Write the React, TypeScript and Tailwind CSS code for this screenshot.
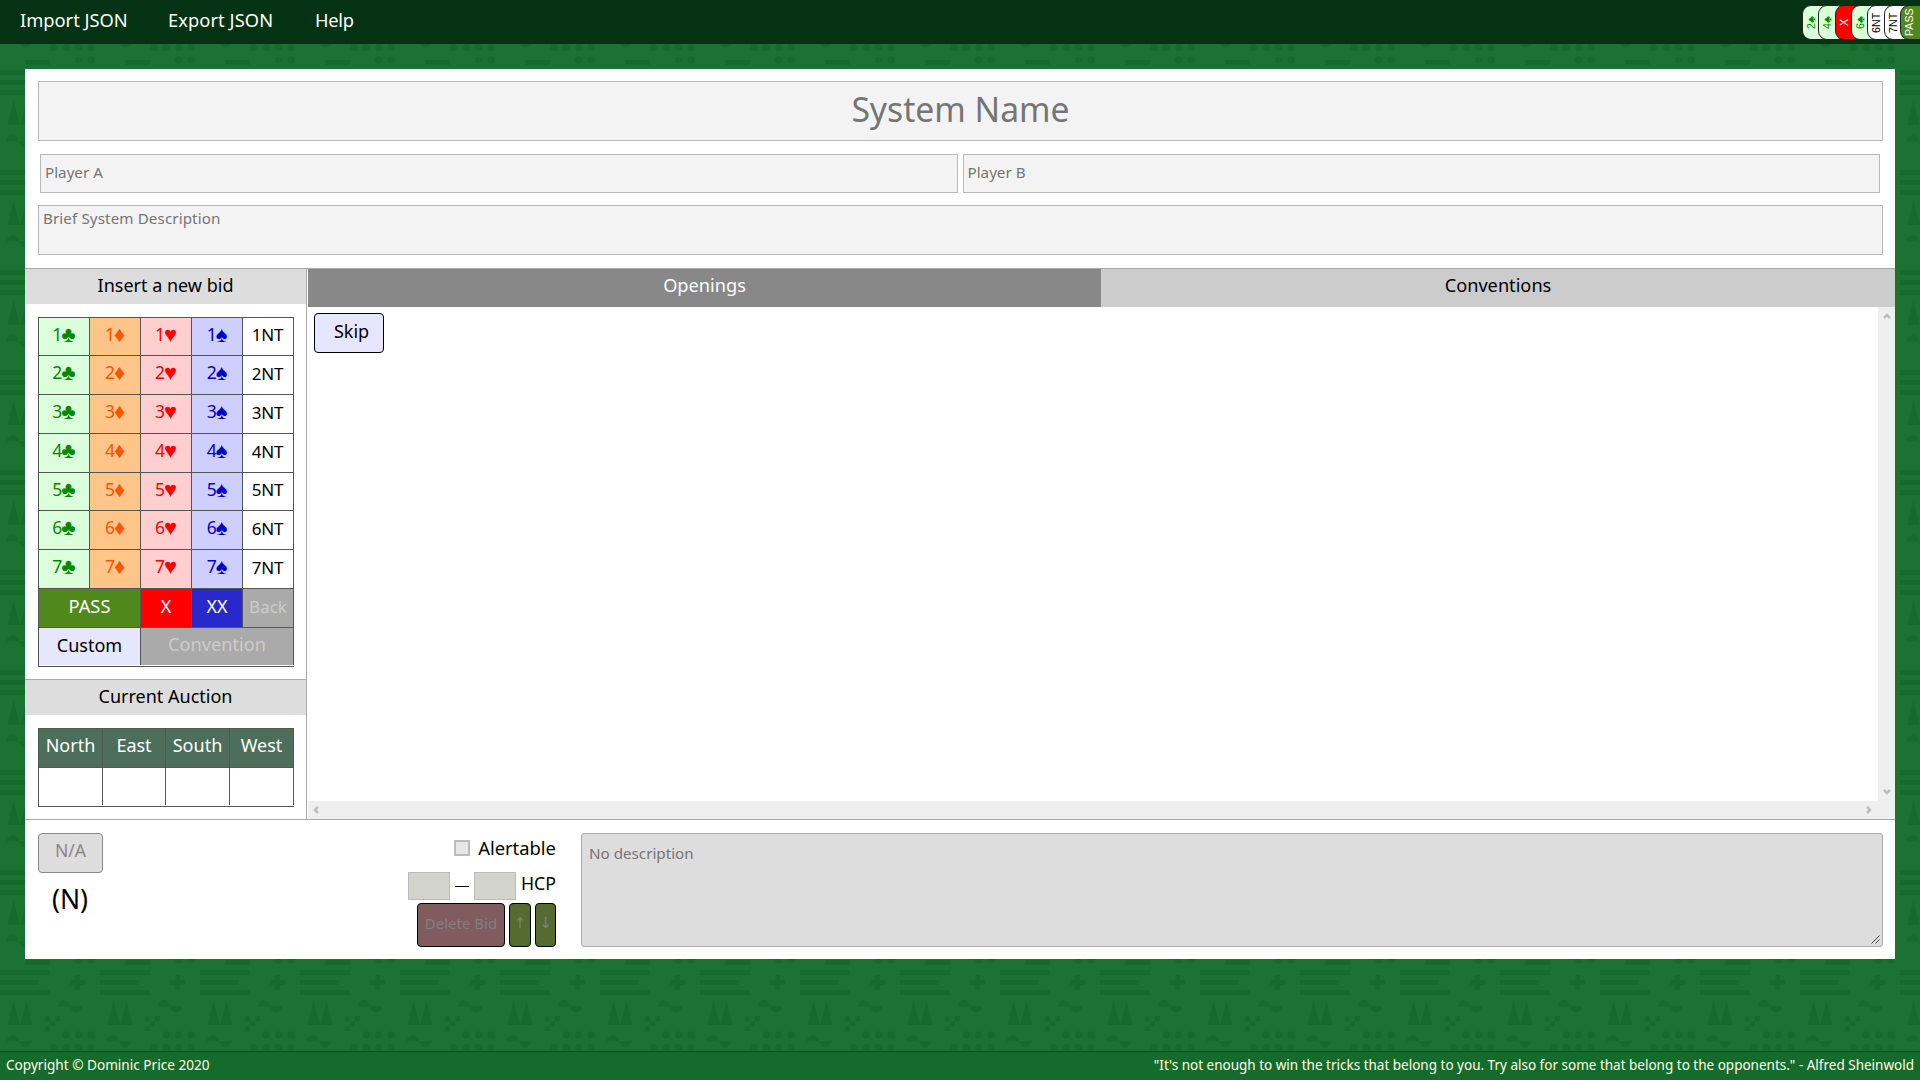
import React from 'react';

const suits = [
  { glyph: '♣', cell: 'bg-[#dbffdb] text-[#008a00]' },
  { glyph: '♦', cell: 'bg-[#ffc588] text-[#ff5500]' },
  { glyph: '♥', cell: 'bg-[#ffcece] text-[#ff0000]' },
  { glyph: '♠', cell: 'bg-[#ceceff] text-[#0000cc]' },
];

const levels = [
  { n: 1, h: 'h-[38px]' },
  { n: 2, h: 'h-[39px]' },
  { n: 3, h: 'h-[39px]' },
  { n: 4, h: 'h-[39px]' },
  { n: 5, h: 'h-[38px]' },
  { n: 6, h: 'h-[39px]' },
  { n: 7, h: 'h-[39px]' },
];

const cards = [
  { label: '2', suit: '♣', look: 'bg-[#dbffdb] text-[#008a00]' },
  { label: '4', suit: '♣', look: 'bg-[#dbffdb] text-[#008a00]' },
  { label: 'X', suit: '', look: 'bg-[#ff0000] text-white' },
  { label: '6', suit: '♣', look: 'bg-[#dbffdb] text-[#008a00]' },
  { label: '6NT', suit: '', look: 'bg-white text-black' },
  { label: '7NT', suit: '', look: 'bg-white text-black' },
  { label: 'PASS', suit: '', look: 'bg-[#50891b] text-white' },
];

function Backdrop() {
  return (
    <svg className="absolute inset-0 h-full w-full" aria-hidden="true">
      <defs>
        <pattern id="tile" width="100" height="100" patternUnits="userSpaceOnUse">
          <g fill="#156b2c">
            <path d="M13.5 0 20 25H7.5ZM26.5 0 32.500 25H20.500Z" />
            <path d="M57.500 6.500a6.200 6.500 0 0 1 12.400 0ZM69.900 6a6.200 6.500 0 0 0 12.400 0Z" />
            <path d="M6.500 41.500a6.200 6.500 0 0 1 12.400 0ZM18.900 41a6.200 6.500 0 0 0 12.400 0Z" />
            <path d="M45 16h5v5h-5ZM55 16h5v5h-5ZM50 21h5v5h-5ZM45 26h5v5h-5Z" />
            <circle cx="66.200" cy="35" r="3.800" />
            <circle cx="78.700" cy="35" r="3.800" />
            <circle cx="91.200" cy="35" r="3.800" />
            <circle cx="53.700" cy="47.500" r="3.800" />
            <circle cx="66.200" cy="47.500" r="3.800" />
            <circle cx="78.700" cy="47.500" r="3.800" />
            <circle cx="91.200" cy="47.500" r="3.800" />
            <circle cx="78.700" cy="60" r="3.800" />
            <circle cx="91.200" cy="60" r="3.800" />
            <path d="M25 60h25v5H25ZM0 70h50v5H0ZM0 80h38.500v5H0ZM0 90h50v5H0Z" />
            <path d="M75 75h5v5h5v5h-5v5h-5v-5h-5v-5h5Z" />
          </g>
        </pattern>
      </defs>
      <rect width="100%" height="100%" fill="url(#tile)" />
    </svg>
  );
}

function Chevron({ turn }: { turn: string }) {
  return (
    <svg className={'h-[8px] w-[8px] ' + turn} viewBox="0 0 8 8" fill="none" stroke="#bdbdbd" strokeWidth="2.500">
      <path d="M1 6 4 3 7 6" />
    </svg>
  );
}

function PanelTitle({ children }: { children: React.ReactNode }) {
  return <h2 className="flex h-[35px] items-center justify-center bg-[#ddd] pb-[3px] text-[18px] text-black">{children}</h2>;
}

function Header() {
  return (
    <header className="relative flex h-[44px] shrink-0 items-start justify-between overflow-hidden bg-[#053212] text-white">
      <nav className="flex h-10 items-center pl-5 text-[18.300px]">
        <a className="w-[148px]">Import JSON</a>
        <a className="w-[147px] tracking-[0.080px]">Export JSON</a>
        <a className="tracking-[-0.3px]">Help</a>
      </nav>
      <div className="-mr-[8px] flex pt-[5px] font-['Liberation_Sans',sans-serif]">
        {cards.map((c, i) => (
          <div key={i} className={'-ml-[11.700px] flex h-[35px] w-7 justify-start rounded-[9px] border border-[#222] ' + c.look}>
            <span className="flex w-[16px] rotate-180 items-center justify-center text-center text-[10.700px] leading-[16px] [text-orientation:sideways] [writing-mode:vertical-rl]">
              {c.label}
              {c.suit}
            </span>
          </div>
        ))}
      </div>
    </header>
  );
}

function SystemDetails() {
  return (
    <section className="h-[199px] pl-[13px] pr-3 pt-3 text-[15.200px] text-[#757575]">
      <div className="flex h-[60px] items-center justify-center border border-[#b8b8b8] bg-[#f3f3f3] pb-[4px] text-[33.700px]">System Name</div>
      <div className="mt-[13px] flex gap-[5px] pl-[2px] pr-[3px]">
        <div className="flex h-[39px] flex-1 items-center border border-[#b8b8b8] bg-[#f3f3f3] pb-[2px] pl-1">Player A</div>
        <div className="flex h-[39px] flex-1 items-center border border-[#b8b8b8] bg-[#f3f3f3] pb-[2px] pl-1">Player B</div>
      </div>
      <div className="mt-3 h-[50px] border border-[#b8b8b8] bg-[#f3f3f3] pl-1 pt-[2px] leading-5 tracking-[0.100px]">Brief System Description</div>
    </section>
  );
}

function BidGrid() {
  const cell = 'flex items-center justify-center border-r border-[#555] pb-[4px] leading-none';
  return (
    <div className="ml-[13px] mt-[13px] w-[256px] border border-[#555] border-r-0 text-[18px]">
      {levels.map((lv) => (
        <div key={lv.n} className={'grid grid-cols-[51px_51px_51px_51px_51px] border-b border-[#555] ' + lv.h}>
          {suits.map((s) => (
            <div key={s.glyph} className={cell + ' text-[17.500px] ' + s.cell}>
              {lv.n}
              <span className="-ml-px font-['Liberation_Sans',sans-serif] text-[22px] leading-[18px]">{s.glyph}</span>
            </div>
          ))}
          <div className={cell + ' bg-white pr-px text-[17px] tracking-[-0.2px] text-black'}>{lv.n}NT</div>
        </div>
      ))}
      <div className="grid h-[39px] grid-cols-[102px_51px_51px_51px] border-b border-[#555] text-white">
        <div className={cell + ' bg-[#50891b] text-[18.300px]'}>PASS</div>
        <div className={cell + ' bg-[#ff0000]'}>X</div>
        <div className={cell + ' bg-[#2828cc]'}>XX</div>
        <div className={cell + ' bg-[#aaa] text-[17px] text-[#ccc]'}>Back</div>
      </div>
      <div className="grid h-[37px] grid-cols-[102px_153px]">
        <div className={cell + ' bg-[#e6e6ff] pb-[2px] text-black'}>Custom</div>
        <div className={cell + ' bg-[#aaa] pb-[2px] text-[18.200px] text-[#ccc]'}>Convention</div>
      </div>
      <div className="h-[1px] bg-white" />
    </div>
  );
}

function Auction() {
  return (
    <div className="ml-[13px] mt-[13px] w-[256px] border border-[#555] border-r-0 text-[18px]">
      <div className="grid h-[39px] grid-cols-[64px_63px_64px_64px] border-b border-[#555] bg-[#4c6e5b] text-white">
        {['North', 'East', 'South', 'West'].map((d) => (
          <div key={d} className="flex items-center justify-center border-r border-[#555] pb-[5px]">{d}</div>
        ))}
      </div>
      <div className="mb-[1px] grid h-[37px] grid-cols-[64px_63px_64px_64px]">
        {[0, 1, 2, 3].map((d) => (
          <div key={d} className="border-r border-[#555]" />
        ))}
      </div>
    </div>
  );
}

function BidTree() {
  return (
    <section className="ml-[1px] flex min-w-0 flex-1 flex-col">
      <div className="flex h-[38px] text-[18.200px]">
        <div className="flex w-[793px] items-center justify-center bg-[#888] pb-[4px] text-white">Openings</div>
        <div className="flex flex-1 items-center justify-center bg-[#ccc] pb-[4px] text-black">Conventions</div>
      </div>
      <div className="flex flex-1">
        <div className="flex-1 pl-[6px] pt-[6px]">
          <div className="flex h-10 w-[70px] items-center justify-center rounded-[4px] border border-black bg-[#e6e6ff] pb-[3px] pl-[5px] text-[18px] text-black">Skip</div>
        </div>
        <div className="flex w-[17px] flex-col items-center justify-between bg-[#efefef] py-[5px]">
          <Chevron turn="rotate-0" />
          <Chevron turn="rotate-180" />
        </div>
      </div>
      <div className="flex h-[18px] items-center justify-between bg-[#efefef] pl-1 pr-[22px]">
        <Chevron turn="-rotate-90" />
        <Chevron turn="rotate-90" />
      </div>
    </section>
  );
}

function BidDetails() {
  return (
    <section className="flex h-[140px] border-t border-[#aaa] px-[13px] pb-3 pr-3 pt-[13px] text-[18.400px] text-black">
      <div className="flex-1">
        <div className="flex h-10 w-[65px] items-center justify-center rounded-[4px] border border-[#888] bg-[#ddd] pb-[6px] text-[17.500px] text-[#888]">N/A</div>
        <div className="mt-[10px] w-[64px] text-center text-[26.500px] leading-8">(N)</div>
      </div>
      <div className="flex w-[160px] flex-col items-end">
        <div className="flex h-[30px] items-center gap-2">
          <span className="mb-[1px] h-4 w-4 border-2 border-[#bbb] bg-[#e6e6e6]" />
          <span>Alertable</span>
        </div>
        <div className="mt-[9px] flex h-7 items-center">
          <span className="h-7 w-[42px] border border-[#bbb] bg-[#d3d3ce]" />
          <span className="mx-[5px] h-[1px] w-[14px] bg-black" />
          <span className="h-7 w-[42px] border border-[#bbb] bg-[#d3d3ce]" />
          <span className="ml-[5px] w-[35px] pb-1 text-[17.700px] leading-none">HCP</span>
        </div>
        <div className="mt-[3px] flex gap-1 text-[15px] text-[#808080]">
          <div className="flex h-11 w-[88px] items-center justify-center rounded-[4px] border border-black bg-[#805c5f] pb-1">Delete Bid</div>
          <div className="flex h-11 w-[22px] items-center justify-center rounded-[4px] border border-black bg-[#556b2f] pb-1 font-['DejaVu_Sans',sans-serif]">↑</div>
          <div className="flex h-11 w-[21px] items-center justify-center rounded-[4px] border border-black bg-[#556b2f] pb-1 font-['DejaVu_Sans',sans-serif]">↓</div>
        </div>
      </div>
      <div className="relative ml-[25px] w-[1302px] rounded-[3px] border border-[#aaa] bg-[#ddd] pl-[7px] pt-[9px] text-[15.200px] leading-5 text-[#757575]">
        No description
        <svg className="absolute bottom-[2px] right-[2px] h-[9px] w-[9px]" viewBox="0 0 9 9" stroke="#444" strokeWidth="1">
          <path d="M.5 8.500l8-8M4.500 8.500l4-4" />
        </svg>
      </div>
    </section>
  );
}

export default function App() {
  return (
    <div className="relative flex h-[1080px] w-[1920px] flex-col overflow-hidden bg-[#1c7232] font-['Noto_Sans','Liberation_Sans',sans-serif] whitespace-nowrap">
      <Backdrop />
      <Header />
      <main className="relative mx-[25px] mt-[25px] flex h-[890px] w-[1870px] shrink-0 flex-col bg-white">
        <SystemDetails />
        <div className="flex h-[551px] border-t border-[#aaa]">
          <aside className="w-[282px] shrink-0 border-r border-[#aaa]">
            <PanelTitle>Insert a new bid</PanelTitle>
            <BidGrid />
            <div className="mt-3 border-t border-[#aaa]">
              <PanelTitle>Current Auction</PanelTitle>
            </div>
            <Auction />
          </aside>
          <BidTree />
        </div>
        <BidDetails />
      </main>
      <footer className="relative mt-auto flex h-[29px] items-center justify-between border-t border-[#055011] bg-[#156b2c] px-[6px] pb-[1px] text-[13.600px] text-[#fffde0]">
        <span>Copyright © Dominic Price 2020</span>
        <span className="text-[13.500px]">"It's not enough to win the tricks that belong to you. Try also for some that belong to the opponents." - Alfred Sheinwold</span>
      </footer>
    </div>
  );
}
